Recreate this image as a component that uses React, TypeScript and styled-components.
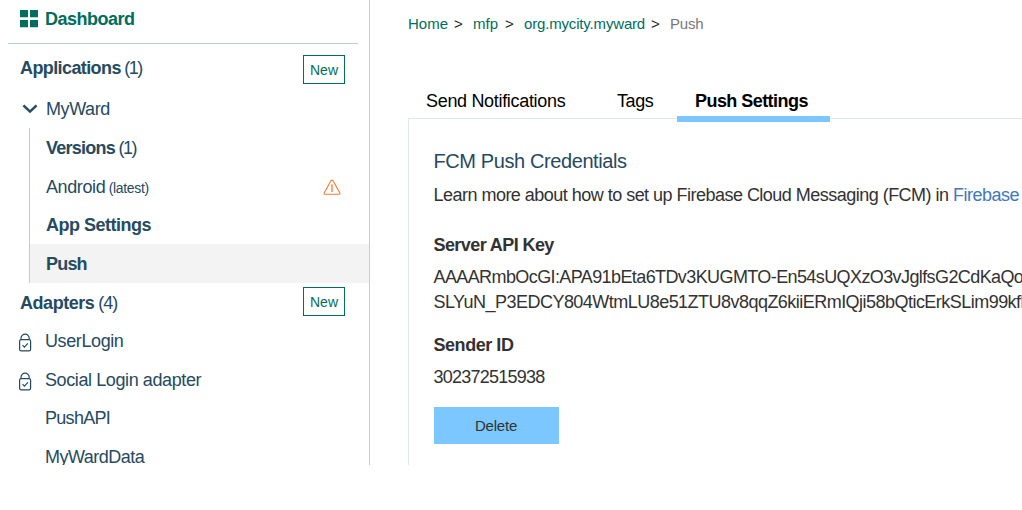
import React from "react";
import styled, { createGlobalStyle } from "styled-components";

const GlobalStyle = createGlobalStyle`
  * { box-sizing: border-box; }
  body {
    margin: 0;
    background: #fff;
    overflow: hidden;
    font-family: "Liberation Sans", Arial, sans-serif;
    font-size: 18px;
  }
`;

const Shell = styled.div`
  display: flex;
  width: 100vw;
  height: 465px;
  overflow: hidden;
`;

const Sidebar = styled.nav`
  flex: 0 0 370px;
  border-right: 1px solid #c7cdcd;
  color: #264a60;
  overflow: hidden;
`;

const Label = styled.span<{ $track?: number; $bold?: boolean; $size?: number }>`
  letter-spacing: ${(p) => p.$track ?? 0}px;
  font-weight: ${(p) => (p.$bold ? 700 : 400)};
  font-size: ${(p) => p.$size ?? 18}px;
  white-space: pre;
`;

const DashboardRow = styled.div`
  display: flex;
  align-items: center;
  gap: 7px;
  height: 44px;
  margin: 0 11px 0 8px;
  padding: 0 0 5px 12px;
  border-bottom: 1px solid #c3cdca;
  color: #006d5d;
`;

const SectionRow = styled.div<{ $height: number; $top?: number }>`
  display: flex;
  align-items: center;
  justify-content: space-between;
  height: ${(p) => p.$height}px;
  padding: ${(p) => p.$top ?? 0}px 24px 0 20px;
`;

const NewButton = styled.button<{ $drop?: number }>`
  width: 42px;
  height: 29px;
  margin-top: ${(p) => p.$drop ?? 0}px;
  padding: 1px 0 0;
  border: 1px solid #006d5d;
  background: #fff;
  color: #006d5d;
  font: 14px "Liberation Sans", Arial, sans-serif;
`;

const AppRow = styled.div`
  display: flex;
  align-items: center;
  gap: 8px;
  height: 36px;
  padding: 0 0 1px 22px;
`;

const AppChildren = styled.div`
  margin-left: 29px;
  border-left: 1px solid #c3cdca;
`;

const ChildRow = styled.div<{ $active?: boolean }>`
  display: flex;
  align-items: center;
  justify-content: space-between;
  height: 38.75px;
  padding: 2px 28px 0 16px;
  background: ${(p) => (p.$active ? "#f3f3f3" : "transparent")};
`;

const AdapterRow = styled.div`
  display: grid;
  grid-template-columns: 27px 1fr;
  align-items: center;
  height: 38.7px;
  padding: 1px 0 0 18px;
`;

const IconSlot = styled.span`
  display: flex;
  padding-top: 2px;
`;

const Main = styled.main`
  flex: 1;
  min-width: 0;
  padding-left: 38px;
  overflow: hidden;
`;

const Breadcrumb = styled.div`
  display: flex;
  align-items: center;
  height: 48px;
  padding-bottom: 2px;
  color: #006d5d;
`;

const Separator = styled.span<{ $before: number; $after: number }>`
  width: 9px;
  margin: 1px ${(p) => p.$after}px 0 ${(p) => p.$before}px;
  color: #222;
  font-size: 15px;
`;

const Current = styled.span`
  color: #777;
`;

const Tabs = styled.div`
  display: flex;
  height: 74px;
  padding-top: 36px;
  color: #000;
`;

const Tab = styled.div<{ $width: number; $active?: boolean }>`
  flex: none;
  width: ${(p) => p.$width}px;
  height: 38px;
  padding: 7px 0 0 18px;
  line-height: 20px;
  border-bottom: 6px solid ${(p) => (p.$active ? "#7cc7ff" : "transparent")};
`;

const Panel = styled.section`
  height: 347px;
  margin-top: -4px;
  padding: 28px 0 0 24.5px;
  border-top: 1px solid #dfe9e9;
  border-left: 1px solid #dfe9e9;
  color: #323232;
  white-space: nowrap;
`;

const Heading = styled.h2`
  margin: 0;
  color: #264a60;
  font-weight: 400;
  line-height: 24px;
`;

const Line = styled.div<{ $top?: number }>`
  height: 25px;
  margin-top: ${(p) => p.$top ?? 0}px;
  line-height: 25px;
`;

const Link = styled.span`
  color: #4178be;
`;

const DeleteButton = styled.button`
  display: block;
  width: 125px;
  height: 37px;
  margin-top: 17px;
  padding: 0;
  border: 0;
  background: #7cc7ff;
  color: #323232;
  font: 15px "Liberation Sans", Arial, sans-serif;
  letter-spacing: -0.2px;
`;

const GridIcon = () => (
  <svg width="18" height="18" viewBox="0 0 18 18" fill="currentColor">
    <path d="M0 0h8v7.2H0zM10 0h8v7.2h-8zM0 10h8v7.2H0zM10 10h8v7.2h-8z" />
  </svg>
);

const Chevron = () => (
  <svg width="16" height="11" viewBox="0 0 16 11" fill="none" stroke="currentColor" strokeWidth="2.5">
    <path d="M1.4 1.3 8 7.6l6.6-6.3" />
  </svg>
);

const Warning = () => (
  <svg width="18" height="16" viewBox="0 0 18 16" fill="none" stroke="#ff7832" strokeWidth="1.1">
    <path d="M8.1 1.6Q9 .7 9.9 1.6L17 14.2q.1 1-.7 1H1.7q-.8 0-.7-1Z" />
    <path d="M9 5.2v7.7" strokeWidth="1.3" />
  </svg>
);

const Lock = () => (
  <svg width="14" height="19" viewBox="0 0 14 19" fill="none" stroke="currentColor" strokeWidth="1.2">
    <rect x="1.6" y="6.6" width="11" height="11.2" rx="1.6" />
    <path d="M3 6.6V5.2a4.1 4.1 0 0 1 8.2 0v1.4M4.5 12.2l1.9 1.9 3.5-3.7" />
  </svg>
);

const adapters = [
  { name: "UserLogin", secured: true, track: -0.4 },
  { name: "Social Login adapter", secured: true, track: -0.4 },
  { name: "PushAPI", secured: false, track: -0.7 },
  { name: "MyWardData", secured: false, track: -0.5 },
];

export default function App() {
  return (
    <>
      <GlobalStyle />
      <Shell>
        <Sidebar>
          <DashboardRow>
            <GridIcon />
            <Label $bold $track={-0.5}>Dashboard</Label>
          </DashboardRow>
          <SectionRow $height={48}>
            <span>
              <Label $bold $track={-0.6}>Applications</Label>
              <Label $track={-1.5}> (1)</Label>
            </span>
            <NewButton $drop={3}>New</NewButton>
          </SectionRow>
          <AppRow>
            <Chevron />
            <Label $track={-0.4}>MyWard</Label>
          </AppRow>
          <AppChildren>
            <ChildRow>
              <span>
                <Label $bold $track={-0.75}>Versions</Label>
                <Label $track={-1.5}> (1)</Label>
              </span>
            </ChildRow>
            <ChildRow>
              <span>
                <Label $track={-0.4}>Android</Label>
                <Label $size={14} $track={-0.35}> (latest)</Label>
              </span>
              <Warning />
            </ChildRow>
            <ChildRow>
              <Label $bold $track={-0.5}>App Settings</Label>
            </ChildRow>
            <ChildRow $active>
              <Label $bold $track={-0.8}>Push</Label>
            </ChildRow>
          </AppChildren>
          <SectionRow $height={38.7} $top={2}>
            <span>
              <Label $bold $track={-0.45}>Adapters</Label>
              <Label $track={-1.1}> (4)</Label>
            </span>
            <NewButton $drop={-4}>New</NewButton>
          </SectionRow>
          {adapters.map((a) => (
            <AdapterRow key={a.name}>
              <IconSlot>{a.secured && <Lock />}</IconSlot>
              <Label $track={a.track}>{a.name}</Label>
            </AdapterRow>
          ))}
        </Sidebar>
        <Main>
          <Breadcrumb>
            <Label $size={15}>Home</Label>
            <Separator $before={6} $after={10}>&gt;</Separator>
            <Label $size={15}>mfp</Label>
            <Separator $before={7} $after={10}>&gt;</Separator>
            <Label $size={15} $track={-0.17}>org.mycity.myward</Label>
            <Separator $before={6} $after={10}>&gt;</Separator>
            <Current><Label $size={15} $track={-0.25}>Push</Label></Current>
          </Breadcrumb>
          <Tabs>
            <Tab $width={191}><Label $track={-0.32}>Send Notifications</Label></Tab>
            <Tab $width={78}><Label $track={-0.4}>Tags</Label></Tab>
            <Tab $width={153} $active><Label $bold $track={-0.55}>Push Settings</Label></Tab>
          </Tabs>
          <Panel>
            <Heading><Label $size={20} $track={-0.4}>FCM Push Credentials</Label></Heading>
            <Line $top={10}>
              <Label $track={-0.52}>{"Learn more about how to set up Firebase Cloud Messaging (FCM) in "}</Label>
              <Link><Label $track={-0.5}>Firebase</Label></Link>
            </Line>
            <Line $top={25}><Label $bold $track={-0.58}>Server API Key</Label></Line>
            <Line $top={7}>
              <Label $track={-0.6}>AAAARmbOcGI:APA91bEta6TDv3KUGMTO-En54sUQXzO3vJglfsG2CdKaQo</Label>
            </Line>
            <Line>
              <Label $track={-0.53}>SLYuN_P3EDCY804WtmLU8e51ZTU8v8qqZ6kiiERmIQji58bQticErkSLim99kfl</Label>
            </Line>
            <Line $top={18}><Label $bold $track={-0.45}>Sender ID</Label></Line>
            <Line $top={7}><Label $track={-0.75}>302372515938</Label></Line>
            <DeleteButton>Delete</DeleteButton>
          </Panel>
        </Main>
      </Shell>
    </>
  );
}
